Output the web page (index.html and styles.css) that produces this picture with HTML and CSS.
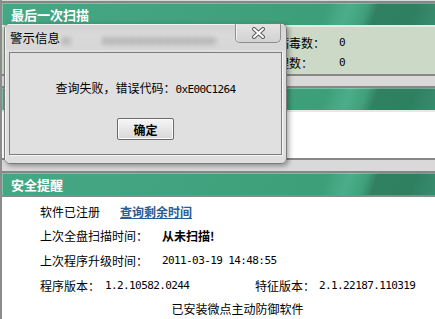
FILE: index.html
```html
<!DOCTYPE html>
<html lang="zh-CN">
<head>
  <meta charset="UTF-8" />
  <title>微点主动防御软件</title>
  <link rel="stylesheet" href="styles.css">
</head>
<body>
  <div class="window">
    <section class="panel">
      <div class="panel-head">最后一次扫描</div>
      <div class="panel-body scan">
        <div></div>
        <div></div>
        <div>发现病毒数：</div>
        <div class="num">0</div>
        <div></div>
        <div></div>
        <div>已处理数：</div>
        <div class="num">0</div>
      </div>
    </section>

    <section class="panel gap">
      <div class="panel-head"></div>
      <div class="panel-body blank"></div>
    </section>

    <section class="panel gap notice">
      <div class="panel-head">安全提醒</div>
      <div class="panel-body info">
        <div class="row r1">
          <span class="w80">软件已注册</span>
          <a class="link" href="#">查询剩余时间</a>
        </div>
        <div class="row r2">
          <span class="w122">上次全盘扫描时间：</span>
          <strong>从未扫描!</strong>
        </div>
        <div class="row r3">
          <span class="w122">上次程序升级时间：</span>
          <span class="num">2011-03-19 14:48:55</span>
        </div>
        <div class="row r4">
          <span class="w65">程序版本：</span>
          <span class="num w150">1.2.10582.0244</span>
          <span class="w64">特征版本：</span>
          <span class="num">2.1.22187.110319</span>
        </div>
        <div class="row r5 center">已安装微点主动防御软件</div>
      </div>
    </section>

    <!-- message box over the main window -->
    <div class="dialog">
      <div class="dialog-head">
        <span class="title">警示信息</span>
        <i class="smudge s1"></i>
        <i class="smudge s2"></i>
        <button class="close" type="button">
          <svg width="15" height="12" viewBox="0 0 15 12">
            <path d="M3 2 L12 10 M12 2 L3 10" stroke="#5a5a5a" stroke-width="4" stroke-linecap="round"/>
            <path d="M3 2 L12 10 M12 2 L3 10" stroke="#ffffff" stroke-width="2" stroke-linecap="round"/>
          </svg>
        </button>
      </div>
      <div class="dialog-body">
        <div class="dialog-box">
          <p class="msg">查询失败，错误代码：<span class="num">0xE00C1264</span></p>
          <button class="btn" type="button">确定</button>
        </div>
      </div>
    </div>
  </div>
</body>
</html>
```

FILE: styles.css
```css
body {
  margin: 0;
  font-family: "Noto Sans CJK SC", sans-serif;
  font-size: 12px;
  color: #000;
  background-color: #d9d9d9;
}

.window {
  position: relative;
  height: 318px;
  overflow: hidden;
  padding-top: 1px;
  border-left: 2px solid #8c8c8c;
}

.num {
  font-family: "DejaVu Sans Mono", monospace;
  font-size: 11px;
  letter-spacing: -0.6px;
}

/* panels */
.panel {
  border-top: 2px solid #878787;
  border-bottom: 2px solid #878787;
}

.panel.gap {
  margin-top: 10px;
}

.notice.gap {
  margin-top: 11px;
  border-bottom: none;
}

.panel-head {
  height: 22px;
  display: flex;
  align-items: center;
  padding-left: 9px;
  color: #fff;
  font-size: 13px;
  font-weight: bold;
  background: linear-gradient(110deg, #45a884 0%, #3d9e7a 74%, #4bae8a 79%, #40a07c 83%, #2f8162 85.5%, #2e8061 94%, #388c6e 100%);
  box-shadow: inset 1px 1px 0 rgba(255,255,255,0.3);
  border-bottom: 2px solid #e4ebe7;
}

.notice .panel-head {
  border-bottom-color: #8a8a8a;
}

.scan {
  height: 42px;
  padding: 5px 0 0 11px;
  background-color: #ccd9c7;
  display: grid;
  grid-template-columns: 84px 156px 86px 1fr;
  grid-auto-rows: 20px;
  align-items: center;
}

.blank {
  height: 46px;
  background-color: #fff;
}

.info {
  height: 130px;
  padding: 2px 0 0 38px;
  background-color: #fff;
}

.row {
  display: flex;
  align-items: center;
}

.r1 { height: 24px; }
.r2 { height: 25px; }
.r3 { height: 24px; }
.r4 { height: 26px; }
.r5 { height: 20px; }

.center {
  justify-content: center;
}

.w80 { width: 80px; }
.w122 { width: 122px; }
.w65 { width: 65px; }
.w150 { width: 150px; }
.w64 { width: 64px; }

.link {
  color: #2c5c92;
  font-weight: bold;
  text-decoration: underline;
}

/* dialog */
.dialog {
  position: absolute;
  left: 2px;
  top: 23px;
  width: 281px;
  border: 1px solid #7a7a7a;
  border-radius: 6px;
  overflow: hidden;
  box-shadow: 2px 2px 5px rgba(0,0,0,0.35);
}

.dialog-head {
  position: relative;
  height: 26px;
  display: flex;
  align-items: center;
  padding-left: 5px;
  background: linear-gradient(#d0d2d0, #d9d9d9 40%, #d7d7d7);
  box-shadow: inset 1px 1px 0 #f2f2f2;
}

.title {
  width: 52px;
  font-size: 12.5px;
}

/* see-through of the window behind the title bar */
.smudge {
  align-self: flex-start;
  margin-top: 13px;
  height: 8px;
  background: repeating-linear-gradient(90deg, #b0b0b0 0 5px, #c6c6c6 5px 7px);
  filter: blur(2px);
  opacity: 0.85;
}

.s1 {
  width: 9px;
}

.s2 {
  width: 114px;
  margin-left: 31px;
}

.close {
  position: absolute;
  right: 5px;
  top: -1px;
  width: 46px;
  height: 20px;
  padding: 0;
  display: flex;
  align-items: center;
  justify-content: center;
  border: 1px solid #8e8e8e;
  border-top: none;
  border-radius: 0 0 5px 5px;
  background: linear-gradient(#e4e4e4, #d2d2d2);
  box-shadow: inset 1px 0 0 #f4f4f4;
}

.dialog-body {
  padding: 2px 4px 8px 4px;
  background-color: #dfdfdf;
  box-shadow: inset 1px 0 0 #f2f2f2;
}

.dialog-box {
  height: 103px;
  box-sizing: border-box;
  padding-top: 27px;
  border: 1px solid #7d7d7d;
  box-shadow: 1px 1px 0 #f7f7f7;
  background-color: #e0e0e0;
  display: flex;
  flex-direction: column;
  align-items: center;
}

.msg {
  margin: 0;
  line-height: 16px;
}

.btn {
  margin-top: 20px;
  width: 57px;
  height: 22px;
  padding: 0;
  border: 1px solid #6b6b6b;
  border-radius: 2px;
  background: linear-gradient(#f6f6f6, #d8d8d8);
  box-shadow: inset 0 0 0 1px #fbfbfb;
  font-family: "Noto Sans CJK SC", sans-serif;
  font-size: 12px;
  font-weight: bold;
  color: #000;
}
```
